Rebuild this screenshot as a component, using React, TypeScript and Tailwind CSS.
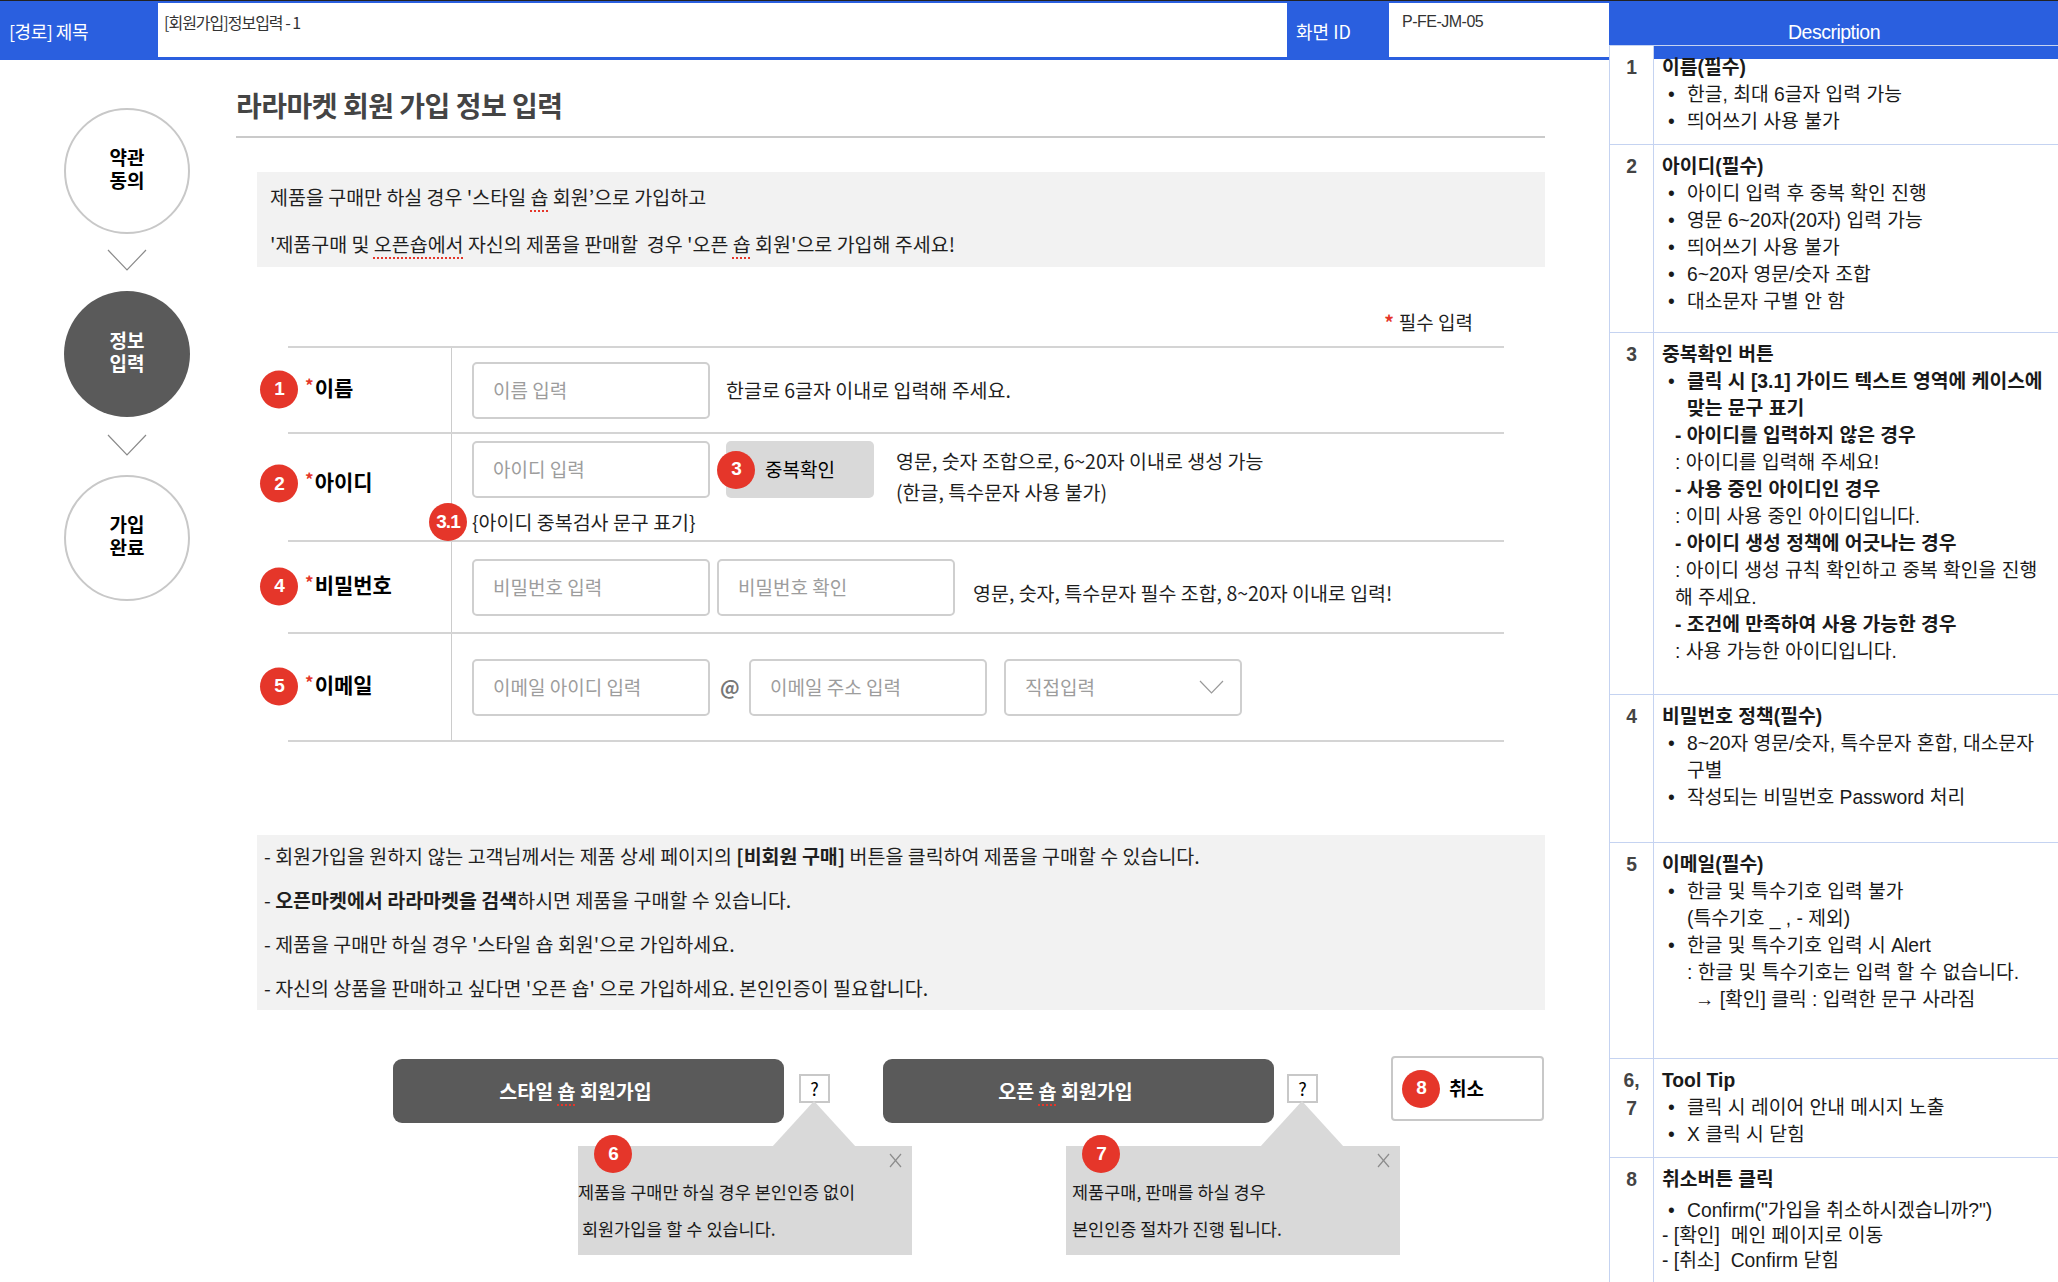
import React from "react";

const Badge = ({ n, className = "" }: { n: string; className?: string }) => (
  <span
    className={`absolute z-10 flex h-[38px] w-[38px] items-center justify-center rounded-full bg-[#e5362a] font-['Liberation_Sans',sans-serif] text-[19px] font-bold tracking-[-1px] text-white ${className}`}
  >
    {n}
  </span>
);

const Spell = ({ children }: { children: React.ReactNode }) => (
  <span className="underline decoration-[#e5362a] decoration-dotted decoration-2 underline-offset-[5px]">
    {children}
  </span>
);

const Field = ({ text, className = "w-[238px]" }: { text: string; className?: string }) => (
  <div
    className={`flex h-[57px] shrink-0 items-center rounded-[5px] border-2 border-[#cfcfcf] pl-[19px] text-[19px] text-[#9d9d9d] ${className}`}
  >
    {text}
  </div>
);

function FormRow({
  label,
  badge,
  h,
  lift = "pb-[5px]",
  children,
}: {
  label: string;
  badge: string;
  h: string;
  lift?: string;
  children: React.ReactNode;
}) {
  return (
    <div className={`grid grid-cols-[164px_1fr] border-b-2 border-[#d4d4d4] ${h}`}>
      <div className={`flex items-center border-r border-[#cccccc] pl-[17px] ${lift}`}>
        <div className="relative flex items-center">
          <Badge n={badge} className="left-[-45px] top-1/2 -translate-y-[46%]" />
          <span className="relative -top-[3px] mr-[1px] text-[17px] font-bold text-[#e5362a]">*</span>
          <span className="text-[21px] font-bold text-black">{label}</span>
        </div>
      </div>
      {children}
    </div>
  );
}

function Step({ first, second, active = false }: { first: string; second: string; active?: boolean }) {
  return (
    <div
      className={`flex h-[126px] w-[126px] items-center justify-center rounded-full pb-[6px] text-center text-[19px] font-bold leading-[23px] ${
        active ? "bg-[#5a5a5a] text-white" : "border-2 border-[#c8c8c8] bg-white text-black"
      }`}
    >
      <p>
        {first}
        <br />
        {second}
      </p>
    </div>
  );
}

const Chevron = () => (
  <svg width="40" height="22" viewBox="0 0 40 22" className="ml-[43px]">
    <polyline points="1,1 20,21 39,1" fill="none" stroke="#8a8a8a" strokeWidth="1.2" />
  </svg>
);

const CloseX = () => (
  <svg width="13" height="15" viewBox="0 0 13 15">
    <line x1="1" y1="1" x2="12" y2="14" stroke="#8c8c8c" strokeWidth="1.2" />
    <line x1="12" y1="1" x2="1" y2="14" stroke="#8c8c8c" strokeWidth="1.2" />
  </svg>
);

function Help({
  margin,
  badge,
  lines,
  textPad,
}: {
  margin: string;
  badge: string;
  lines: string[];
  textPad: string;
}) {
  return (
    <div
      className={`relative mt-[18px] flex h-[29px] w-[31px] items-center justify-center border-2 border-[#c8c8c8] bg-white text-[18px] text-black ${margin}`}
    >
      ?
      <svg className="absolute left-[-29px] top-[25px]" width="84" height="46" viewBox="0 0 84 46">
        <polygon points="42,0 0,46 84,46" fill="#d9d9d9" />
      </svg>
      <div className="absolute left-[-223px] top-[70px] h-[109px] w-[334px] bg-[#d9d9d9]">
        <Badge n={badge} className="left-[16px] top-[-11px]" />
        <div className="absolute left-[311px] top-[7px]">
          <CloseX />
        </div>
        <div
          className={`flex flex-col gap-[13px] pt-[34px] text-[17.5px] leading-[24px] whitespace-pre text-[#1a1a1a] ${textPad}`}
        >
          {lines.map((l) => (
            <span key={l}>{l}</span>
          ))}
        </div>
      </div>
    </div>
  );
}

function DescRow({
  num,
  h,
  band = false,
  children,
}: {
  num: React.ReactNode;
  h: string;
  band?: boolean;
  children: React.ReactNode;
}) {
  return (
    <div className={`flex shrink-0 border-b border-[#c5d3f1] ${h}`}>
      <div className="w-[44px] shrink-0 border-r border-[#c5d3f1] pt-[8px] text-center font-bold leading-[28px] text-[#444]">
        {num}
      </div>
      <div className="relative flex-1 pl-[8px] pt-[8px]">
        {band && <div className="absolute left-0 right-0 top-0 h-[13px] bg-[#2a5fdf]" />}
        <div className="relative">{children}</div>
      </div>
    </div>
  );
}

const Li = ({ children, bold = false }: { children: React.ReactNode; bold?: boolean }) => (
  <div className={`flex ${bold ? "font-bold" : ""}`}>
    <span className="w-[25px] shrink-0 pl-[6px] font-normal">•</span>
    <span>{children}</span>
  </div>
);

export default function App() {
  return (
    <div className="flex h-[1282px] w-[2058px] overflow-hidden bg-white font-['Noto_Sans_CJK_KR','Liberation_Sans',sans-serif] text-[#1f1f1f]">
      <div className="flex w-[1609px] shrink-0 flex-col">
        <header className="flex h-[60px] shrink-0 border-t border-[#222] bg-[#2a5fdf] pb-[3px] pt-[2px]">
          <div className="flex w-[158px] items-center pl-[9px] pt-[3px] text-[18px] tracking-[-0.5px] text-white">
            [경로] 제목
          </div>
          <div className="w-[1129px] bg-white pl-[6px] pt-[9px] text-[16px] leading-[20px] tracking-[-1px] text-[#333]">
            [회원가입]정보입력 - 1
          </div>
          <div className="flex w-[102px] items-center pl-[9px] pt-[3px] text-[18px] text-white">화면 ID</div>
          <div className="flex-1 bg-white pl-[13px] pt-[9px] font-['Liberation_Sans',sans-serif] text-[16px] leading-[20px] tracking-[-0.5px] text-[#333]">
            P-FE-JM-05
          </div>
        </header>

        <div className="flex">
          <div className="flex w-[236px] shrink-0 flex-col pl-[64px] pt-[48px]">
            <Step first="약관" second="동의" />
            <div className="mt-[15px] h-[22px]">
              <Chevron />
            </div>
            <div className="mt-[20px]">
              <Step first="정보" second="입력" active />
            </div>
            <div className="mt-[17px] h-[22px]">
              <Chevron />
            </div>
            <div className="mt-[19px]">
              <Step first="가입" second="완료" />
            </div>
          </div>

          <main className="flex w-[1309px] flex-col">
            <div className="border-b-2 border-[#cacaca] pb-[14px] pt-[28px]">
              <h1 className="text-[28px] font-bold leading-[34px] tracking-[-0.5px] text-[#444]">
                라라마켓 회원 가입 정보 입력
              </h1>
            </div>

            <div className="ml-[21px] mt-[34px] flex h-[95px] flex-col gap-[22px] bg-[#f2f2f2] pl-[13px] pt-[12px] text-[19.5px] leading-[25px]">
              <p>
                제품을 구매만 하실 경우 '스타일 <Spell>숍</Spell> 회원’으로 가입하고
              </p>
              <p>
                '제품구매 및 <Spell>오픈숍에서</Spell> 자신의 제품을 판매할&nbsp; 경우 '오픈 <Spell>숍</Spell> 회원'으로 가입해
                주세요!
              </p>
            </div>

            <div className="mt-[42px] flex justify-end pr-[72px] text-[19px] leading-[25px]">
              <span className="mr-[5px] font-bold text-[#e5362a]">*</span>필수 입력
            </div>

            <div className="ml-[52px] mt-[12px] w-[1216px] border-t-2 border-[#d4d4d4]">
              <FormRow label="이름" badge="1" h="h-[86px]">
                <div className="flex items-center pl-[20px] text-[19.5px]">
                  <Field text="이름 입력" />
                  <span className="ml-[16px]">한글로 6글자 이내로 입력해 주세요.</span>
                </div>
              </FormRow>

              <FormRow label="아이디" badge="2" h="h-[108px]" lift="pb-[10px]">
                <div className="flex flex-col pl-[20px] pt-[7px] text-[19.5px]">
                  <div className="flex h-[57px] items-start">
                    <Field text="아이디 입력" />
                    <div className="relative ml-[16px] flex h-[57px] w-[148px] shrink-0 items-center justify-center rounded-[5px] bg-[#d9d9d9] text-[19px] text-black">
                      <Badge n="3" className="left-[-9px] top-1/2 -translate-y-1/2" />
                      중복확인
                    </div>
                    <div className="ml-[22px] mt-[4px] flex flex-col leading-[31px]">
                      <span>영문, 숫자 조합으로, 6~20자 이내로 생성 가능</span>
                      <span>(한글, 특수문자 사용 불가)</span>
                    </div>
                  </div>
                  <div className="relative mt-[12px] leading-[24px]">
                    <Badge n="3.1" className="left-[-43px] top-1/2 -translate-y-1/2" />
                    {"{아이디 중복검사 문구 표기}"}
                  </div>
                </div>
              </FormRow>

              <FormRow label="비밀번호" badge="4" h="h-[92px]">
                <div className="flex items-center pl-[20px] text-[19.5px]">
                  <Field text="비밀번호 입력" />
                  <Field text="비밀번호 확인" className="ml-[7px] w-[238px]" />
                  <span className="ml-[18px] mt-[12px]">영문, 숫자, 특수문자 필수 조합, 8~20자 이내로 입력!</span>
                </div>
              </FormRow>

              <FormRow label="이메일" badge="5" h="h-[108px]">
                <div className="flex items-center pl-[20px] text-[19.5px]">
                  <Field text="이메일 아이디 입력" />
                  <span className="ml-[10px] w-[29px] font-bold text-[#777]">@</span>
                  <Field text="이메일 주소 입력" className="w-[238px]" />
                  <div className="ml-[17px] flex h-[57px] w-[238px] items-center justify-between rounded-[5px] border-2 border-[#cfcfcf] pl-[19px] pr-[16px] text-[19px] text-[#9d9d9d]">
                    직접입력
                    <svg width="25" height="14" viewBox="0 0 25 14">
                      <polyline points="1,1 12.5,13 24,1" fill="none" stroke="#999" strokeWidth="1.2" />
                    </svg>
                  </div>
                </div>
              </FormRow>
            </div>

            <div className="ml-[21px] mt-[93px] flex h-[175px] flex-col gap-[19px] bg-[#f2f2f2] pl-[7px] pt-[8px] text-[19.5px] leading-[25px]">
              <p>
                - 회원가입을 원하지 않는 고객님께서는 제품 상세 페이지의 <b>[비회원 구매]</b> 버튼을 클릭하여 제품을 구매할 수
                있습니다.
              </p>
              <p>
                - <b>오픈마켓에서 라라마켓을 검색</b>하시면 제품을 구매할 수 있습니다.
              </p>
              <p>- 제품을 구매만 하실 경우 '스타일 숍 회원'으로 가입하세요.</p>
              <p>- 자신의 상품을 판매하고 싶다면 '오픈 숍' 으로 가입하세요. 본인인증이 필요합니다.</p>
            </div>

            <div className="mt-[46px] flex items-start">
              <div className="ml-[157px] mt-[3px] flex h-[64px] w-[391px] items-center justify-center rounded-[9px] bg-[#5a5a5a] pr-[26px] text-[19.5px] font-bold text-white">
                스타일&nbsp;<Spell>숍</Spell>&nbsp;회원가입
              </div>
              <Help
                margin="ml-[15px]"
                badge="6"
                textPad="pl-0"
                lines={["제품을 구매만 하실 경우 본인인증 없이", " 회원가입을 할 수 있습니다."]}
              />
              <div className="ml-[53px] mt-[3px] flex h-[64px] w-[391px] items-center justify-center rounded-[9px] bg-[#5a5a5a] pr-[26px] text-[19.5px] font-bold text-white">
                오픈&nbsp;<Spell>숍</Spell>&nbsp;회원가입
              </div>
              <Help
                margin="ml-[13px]"
                badge="7"
                textPad="pl-[6px]"
                lines={["제품구매, 판매를 하실 경우", "본인인증 절차가 진행 됩니다."]}
              />
              <div className="relative ml-[73px] flex h-[65px] w-[153px] items-center rounded-[4px] border-2 border-[#c8c8c8] bg-white pl-[56px] text-[19px] font-bold text-black">
                <Badge n="8" className="left-[9px] top-1/2 -translate-y-1/2" />
                취소
              </div>
            </div>
          </main>
        </div>
      </div>

      <aside className="flex w-[449px] shrink-0 flex-col whitespace-nowrap font-['Liberation_Sans','Noto_Sans_CJK_KR',sans-serif] text-[19.3px] leading-[27px] text-[#1a1a1a]">
        <div className="h-[46px] shrink-0 border-t border-b border-[#222] border-b-[#c5d3f1] bg-[#2a5fdf] pl-[1px] pt-[21px] text-center text-[19.5px] leading-[20px] tracking-[-0.5px] text-white">
          Description
        </div>
        <div className="flex flex-1 flex-col border-l border-[#c5d3f1]">
          <DescRow num="1" h="h-[99px]" band>
            <div className="font-bold">이름(필수)</div>
            <Li>한글, 최대 6글자 입력 가능</Li>
            <Li>띄어쓰기 사용 불가</Li>
          </DescRow>
          <DescRow num="2" h="h-[188px]">
            <div className="font-bold">아이디(필수)</div>
            <Li>아이디 입력 후 중복 확인 진행</Li>
            <Li>영문 6~20자(20자) 입력 가능</Li>
            <Li>띄어쓰기 사용 불가</Li>
            <Li>6~20자 영문/숫자 조합</Li>
            <Li>대소문자 구별 안 함</Li>
          </DescRow>
          <DescRow num="3" h="h-[362px]">
            <div className="font-bold">중복확인 버튼</div>
            <Li bold>
              클릭 시 [3.1] 가이드 텍스트 영역에 케이스에
              <br />
              맞는 문구 표기
            </Li>
            <div className="pl-[13px]">
              <div className="font-bold">- 아이디를 입력하지 않은 경우</div>
              <div>: 아이디를 입력해 주세요!</div>
              <div className="font-bold">- 사용 중인 아이디인 경우</div>
              <div>: 이미 사용 중인 아이디입니다.</div>
              <div className="font-bold">- 아이디 생성 정책에 어긋나는 경우</div>
              <div>: 아이디 생성 규칙 확인하고 중복 확인을 진행</div>
              <div>해 주세요.</div>
              <div className="font-bold">- 조건에 만족하여 사용 가능한 경우</div>
              <div>: 사용 가능한 아이디입니다.</div>
            </div>
          </DescRow>
          <DescRow num="4" h="h-[148px]">
            <div className="font-bold">비밀번호 정책(필수)</div>
            <Li>
              8~20자 영문/숫자, 특수문자 혼합, 대소문자
              <br />
              구별
            </Li>
            <Li>작성되는 비밀번호 Password 처리</Li>
          </DescRow>
          <DescRow num="5" h="h-[216px]">
            <div className="font-bold">이메일(필수)</div>
            <Li>
              한글 및 특수기호 입력 불가
              <br />
              (특수기호 _ , - 제외)
            </Li>
            <Li>
              한글 및 특수기호 입력 시 Alert
              <br />: 한글 및 특수기호는 입력 할 수 없습니다.
              <br />
              <span className="pl-[8px]">→ [확인] 클릭 : 입력한 문구 사라짐</span>
            </Li>
          </DescRow>
          <DescRow
            num={
              <>
                6,
                <br />7
              </>
            }
            h="h-[99px]"
          >
            <div className="font-bold">Tool Tip</div>
            <Li>클릭 시 레이어 안내 메시지 노출</Li>
            <Li>X 클릭 시 닫힘</Li>
          </DescRow>
          <div className="flex flex-1">
            <div className="w-[44px] shrink-0 border-r border-[#c5d3f1] pt-[8px] text-center font-bold leading-[28px] text-[#444]">
              8
            </div>
            <div className="flex-1 pl-[8px] pt-[8px]">
              <div className="font-bold">취소버튼 클릭</div>
              <div className="mt-[5px] leading-[25px]">
                <Li>Confirm("가입을 취소하시겠습니까?")</Li>
                <div>- [확인]&nbsp; 메인 페이지로 이동</div>
                <div>- [취소]&nbsp; Confirm 닫힘</div>
              </div>
            </div>
          </div>
        </div>
      </aside>
    </div>
  );
}
